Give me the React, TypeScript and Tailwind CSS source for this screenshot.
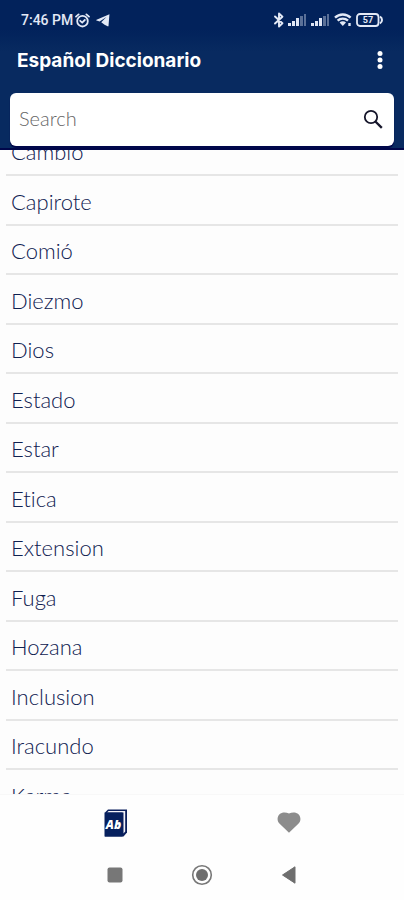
import { useState } from 'react';

const words = [
  'Cambio',
  'Capirote',
  'Comió',
  'Diezmo',
  'Dios',
  'Estado',
  'Estar',
  'Etica',
  'Extension',
  'Fuga',
  'Hozana',
  'Inclusion',
  'Iracundo',
  'Karma',
];

function SignalIcon() {
  return (
    <svg width="19" height="12" viewBox="0 0 19 12" fill="#dfe6f5">
      <rect x="0" y="9" width="3" height="3" />
      <rect x="4" y="7" width="3" height="5" />
      <rect x="8" y="4" width="3" height="8" />
      <rect x="12" y="2" width="3" height="10" opacity="0.4" />
      <rect x="16" y="0" width="2" height="12" opacity="0.4" />
    </svg>
  );
}

function StatusBar() {
  return (
    <div className="flex h-9 items-center justify-between pl-[21px] pr-[21px] pt-1 text-[#e3e9f6]">
      <div className="flex items-center gap-[2px]">
        <span className="font-[Roboto,sans-serif] text-sm font-medium">7:46 PM</span>
        <svg width="15" height="15" viewBox="0 0 15 15" fill="none" stroke="currentColor" strokeWidth="1.8" strokeLinecap="round">
          <circle cx="7.5" cy="8.2" r="5.3" />
          <path d="M1 3.6 3.6 1.4M14 3.6l-2.6-2.2M5.2 7.8l2 1.8 2.6-2.6" />
        </svg>
        <svg className="ml-1" width="14" height="14" viewBox="0 0 15 14" fill="currentColor">
          <path d="M14.4.8.6 6.7c-.5.2-.5.7 0 .9l3.3 1.1 7.3-5-5.6 5.6 3.6 2.9 3.2 1.6c.5.3.9.1 1-.4z" />
        </svg>
      </div>
      <div className="flex items-center gap-1">
        <svg width="10" height="16" viewBox="0 0 10 16" fill="none" stroke="currentColor" strokeWidth="1.9" strokeLinejoin="round" strokeLinecap="round">
          <path d="M1 4.5 8.4 11.3 5 14.6V1.4l3.4 3.3L1 11.5" />
        </svg>
        <SignalIcon />
        <SignalIcon />
        <svg width="18" height="14" viewBox="0 0 18 14" fill="none" stroke="currentColor" strokeWidth="2.4">
          <path d="M1 4.6a11.2 11.2 0 0 1 15.6 0M3.6 7.7a7.5 7.5 0 0 1 10.4 0" />
          <path d="M5.6 9.6a4.6 4.6 0 0 1 6.4 0L8.8 13z" fill="currentColor" stroke="none" />
          <path d="M15.5 10v3" />
        </svg>
        <svg width="27" height="14" viewBox="0 0 27 14" fill="none" stroke="currentColor" strokeWidth="1.8">
          <rect x="1" y="1" width="21.5" height="12" rx="3" />
          <path d="M24 3.5c1.6 1 2 2.2 2 3.5s-.4 2.5-2 3.5" strokeWidth="2" />
          <text x="12" y="10" textAnchor="middle" fontSize="9" fontWeight="700" fontFamily="Roboto, sans-serif" fill="currentColor" stroke="none">
            57
          </text>
        </svg>
      </div>
    </div>
  );
}

export default function App() {
  const [query, setQuery] = useState('');

  return (
    <div className="flex h-screen flex-col overflow-hidden bg-[#fdfdfd] font-[Lato,sans-serif]">
      <header className="shrink-0 border-b-2 border-[#00064a] bg-linear-to-b from-[#02225b] from-20% to-[#082a60] to-35%">
        <StatusBar />
        <div className="flex h-[50px] items-center justify-between pl-[17px] pr-3">
          <h1 className="font-[Inter,sans-serif] text-[19px] font-bold text-white">Español Diccionario</h1>
          <button type="button" aria-label="Menu" className="flex w-6 justify-center">
            <svg width="6" height="20" viewBox="0 0 6 20" fill="#fff">
              <circle cx="3" cy="2.5" r="2.5" />
              <circle cx="3" cy="9" r="2.5" />
              <circle cx="3" cy="15.5" r="2.5" />
            </svg>
          </button>
        </div>
        <div className="px-[10px] pb-[2px] pt-[7px]">
          <form
            className="flex h-[53px] items-center rounded-md bg-white pl-[9px] pr-[10px] shadow-[0_2px_1px_#00064a]"
            onSubmit={(e) => e.preventDefault()}
          >
            <input
              type="text"
              aria-label="Search"
              placeholder="Search"
              value={query}
              onChange={(e) => setQuery(e.target.value)}
              className="min-w-0 flex-1 pb-1 text-xl font-light text-[#333] outline-none placeholder:text-[#666]"
            />
            <button type="submit" aria-label="Submit search">
              <svg width="22" height="22" viewBox="0 0 22 22" fill="none" stroke="#16162b" strokeWidth="1.8">
                <circle cx="9" cy="8" r="6.2" />
                <path d="m13.4 12.5 6.4 6.4" strokeWidth="2.3" />
              </svg>
            </button>
          </form>
        </div>
      </header>

      <main className="min-h-0 flex-1 overflow-hidden px-[6px]">
        {/* list is scrolled part of a row down */}
        <ul className="-mt-[23px]">
          {words.map((word) => (
            <li key={word} className="border-b-2 border-[#e6e6e6] odd:h-[49px] even:h-[50px]">
              <a
                href="#"
                className="flex h-full items-center pl-[5px] pt-[2px] text-[22px] font-light text-[#0f2050] [font-variant-ligatures:none]"
              >
                {word}
              </a>
            </li>
          ))}
        </ul>
      </main>

      <footer className="shrink-0 bg-[#fefefe]">
        <nav className="grid h-14 grid-cols-2 border-t border-[#f8f8f8] px-[29px]">
          <button type="button" aria-label="Dictionary" className="flex items-center justify-center">
            <svg width="24" height="28" viewBox="0 0 24 28">
              <path d="M1 3.5 4 .5h19v23l-3.5 4H1z" fill="#0a1f5c" />
              <path d="M3 3.6 4.6 1.9h16.6v20.6l-1.7 2V3.6z" fill="#f4f4fa" />
              <rect x="0.5" y="3.5" width="18" height="24" fill="#06205e" />
              <text x="9.5" y="20" textAnchor="middle" fontSize="12" fontWeight="800" fontStyle="italic" fontFamily="Open Sans, sans-serif" fill="#fff">
                Ab
              </text>
            </svg>
          </button>
          <button type="button" aria-label="Favorites" className="flex items-center justify-center">
            <svg width="24" height="21" viewBox="0 0 24 21" fill="#8c8c8c">
              <path d="M12 20.8 2.4 11.6C-.2 8.9.1 4.7 2.5 2.3 4.8 0 8.8-.2 12 1.6 15.2-.2 19.2 0 21.5 2.3c2.4 2.4 2.7 6.6.1 9.3z" />
            </svg>
          </button>
        </nav>
        <nav className="grid h-[50px] grid-cols-3 px-[72px]">
          <button type="button" aria-label="Recent apps" className="flex items-center justify-center">
            <svg width="16" height="16" viewBox="0 0 16 16" fill="#777">
              <rect x="0.5" y="0.5" width="15" height="15" rx="2" />
            </svg>
          </button>
          <button type="button" aria-label="Home" className="flex items-center justify-center">
            <svg width="22" height="22" viewBox="0 0 22 22">
              <circle cx="11" cy="11" r="9.3" fill="none" stroke="#777" strokeWidth="1.6" />
              <circle cx="11" cy="11" r="6" fill="#6e6e6e" />
            </svg>
          </button>
          <button type="button" aria-label="Back" className="flex items-center justify-center">
            <svg width="14" height="18" viewBox="0 0 14 18" fill="#6e6e6e">
              <path d="M.5 9 13 .8v16.4z" stroke="#6e6e6e" strokeLinejoin="round" />
            </svg>
          </button>
        </nav>
      </footer>
    </div>
  );
}
